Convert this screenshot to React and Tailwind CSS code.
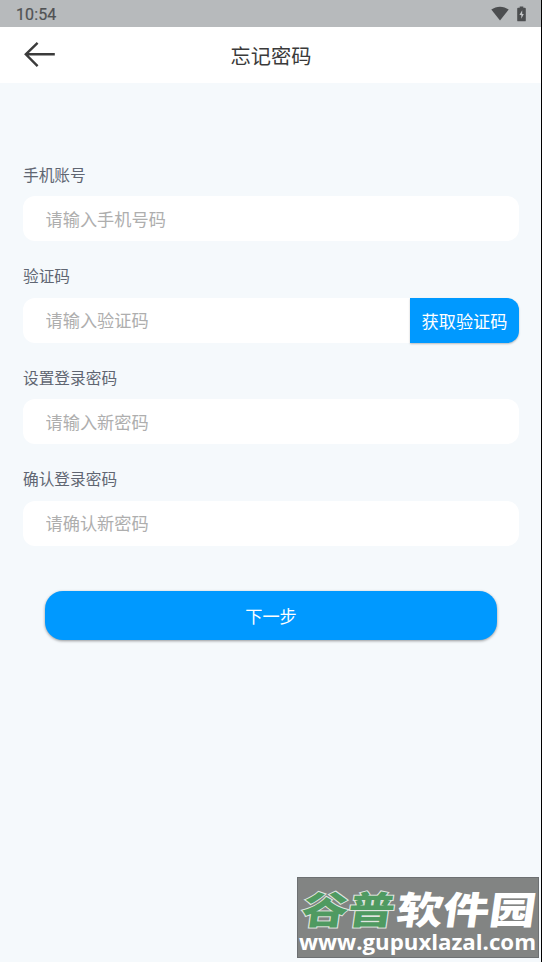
import { useState } from "react";

const StatusBar = () => (
  <div className="flex h-[27px] items-center justify-between bg-[#b7babc] pl-4 pr-[15px] text-[#505254]">
    <span className="pt-0.5 font-['Roboto',sans-serif] text-[16px] leading-none tracking-[0.1px] [-webkit-text-stroke:0.2px_#505254]">10:54</span>
    <div className="flex items-center gap-2">
      <svg width="18" height="15" viewBox="0 0 18 15" fill="#4c4e50">
        <path d="M0.3 3.6C5.3-0.3 12.7-0.3 17.7 3.6L9 14.5z" />
      </svg>
      <svg width="9" height="16" viewBox="0 0 9 16">
        <path d="M2.7 0.5h3.6v1.3h1.6q0.9 0 0.9 0.9v11.7q0 0.9-0.9 0.9H1.1q-0.9 0-0.9-0.9V2.7q0-0.9 0.9-0.9h1.6z" fill="#4c4e50" />
        <path d="M5.2 4.3L2.4 9h1.9v3.8L6.8 8H5.2z" fill="#c4c6c8" />
      </svg>
    </div>
  </div>
);

const Header = () => (
  <header className="relative flex h-14 items-center justify-center bg-white">
    <button type="button" aria-label="返回" className="absolute left-6 top-[13px]">
      <svg width="32" height="30" viewBox="0 0 32 30" fill="none" stroke="#3b3b3b" strokeWidth="2.4">
        <path d="M30.8 14.3H2M13.6 2.8L1.8 14.3L13.6 26.2" />
      </svg>
    </button>
    <h1 className="pl-px pt-px text-[20.2px] leading-7 text-[#3a3a3a]">忘记密码</h1>
  </header>
);

const Field = ({ label, placeholder, type = "text", children }) => {
  const [value, setValue] = useState("");

  return (
    <div className="mb-[23.05px]">
      <label className="block text-[15.7px] leading-6 text-[#606672]">{label}</label>
      <div className="mt-[9.35px] flex h-[45px] rounded-xl bg-white">
        <input
          type={type}
          value={value}
          onChange={(e) => setValue(e.target.value)}
          placeholder={placeholder}
          className="min-w-0 flex-1 bg-transparent pl-[22.5px] text-[17.2px] text-[#333333] outline-none placeholder:text-[#aeaeae]"
        />
        {children}
      </div>
    </div>
  );
};

const Watermark = () => (
  <div className="absolute bottom-1 left-[297px] h-[81px] w-[242px] border border-[#6d7072] bg-[#828483]">
    <svg width="240" height="79" viewBox="1 1 240 79" className="overflow-visible">
      <g fontFamily="'Noto Sans CJK SC', sans-serif" fontWeight="900" fontSize="38" transform="translate(3 46.5) skewX(-8)">
        <text x="0" y="0" textLength="93" lengthAdjust="spacingAndGlyphs" fill="#4f9a61" stroke="#dfe5e0" strokeWidth="2" paintOrder="stroke">谷普</text>
        <text x="95" y="0" textLength="139" lengthAdjust="spacingAndGlyphs" fill="#ffffff">软件园</text>
      </g>
      <text x="2" y="73" textLength="237" lengthAdjust="spacingAndGlyphs" fill="#ffffff" fontFamily="'Open Sans', sans-serif" fontWeight="700" fontSize="22">www.gupuxlazal.com</text>
    </svg>
  </div>
);

const App = () => {
  return (
    <div className="relative h-[962px] w-[542px] overflow-hidden border-r border-black bg-[#f5f9fc] font-['Noto_Sans_CJK_SC',sans-serif]">
      <StatusBar />
      <Header />

      <form className="pl-[23px] pr-[22px] pt-20" onSubmit={(e) => e.preventDefault()}>
        <Field label="手机账号" placeholder="请输入手机号码" />
        <Field label="验证码" placeholder="请输入验证码">
          <button type="button" className="w-[109px] rounded-r-xl bg-[#0099ff] pt-0.5 text-[17.2px] text-white shadow-[0_1px_2px_rgba(0,0,0,0.25)]">
            获取验证码
          </button>
        </Field>
        <Field label="设置登录密码" placeholder="请输入新密码" type="password" />
        <Field label="确认登录密码" placeholder="请确认新密码" type="password" />

        <div className="px-[22px] pt-[22.4px]">
          <button type="submit" className="block h-[49px] w-full rounded-[18px] bg-[#0099ff] text-[17.2px] text-white shadow-[0_1px_3px_rgba(0,0,0,0.4)]">
            下一步
          </button>
        </div>
      </form>

      <Watermark />
    </div>
  );
};

export default App;
